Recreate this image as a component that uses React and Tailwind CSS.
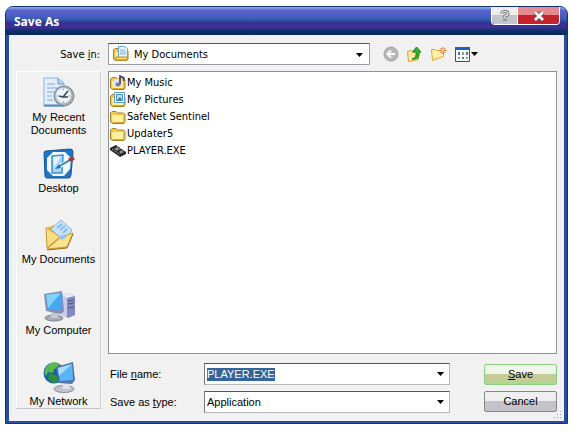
import { useEffect, useRef, useState } from "react";

function RecentIcon() {
  return (
    <svg className="h-8 w-8" viewBox="0 0 32 32" aria-hidden="true">
      <path d="M1 1h14l6 5v23H1z" fill="#e4effb" stroke="#8fb0dc" />
      <path d="M15 1v6h6" fill="#b9d2f0" stroke="#6f98d0" />
      <path d="M4 7h8M4 11h13M4 15h7M4 19h5M4 23h6" stroke="#7fa6dc" />
      <path d="M1 28.5h20" stroke="#4f86cc" strokeWidth="2" />
      <circle cx="21" cy="19" r="10" fill="#a9b0b8" stroke="#7c848d" />
      <circle cx="20.5" cy="18.5" r="7.5" fill="#eef6fb" stroke="#d5dde4" />
      <path d="M20 20l5-6M20 20l-4-1M20 20h5" stroke="#3b424d" strokeWidth="1.5" />
      <path d="M20.5 12v1M27 19h-1M20.5 25.500v-1M14 19h1" stroke="#5a7ea8" />
    </svg>
  );
}

function DesktopIcon() {
  return (
    <svg className="h-8 w-8" viewBox="0 0 32 32" aria-hidden="true">
      <path d="M1 5q0-2 2-2l24-2q3 0 3 3l-2 23q0 3-3 3H4q-2 0-2-2z" fill="#1f75c4" stroke="#14589f" />
      <path d="M10 4h12l6 6-1 11-6 7H10l-6-6V10z" fill="#f2faff" />
      <path d="M9 8l11-1-1 18H9z" fill="#a9d5f5" stroke="#3d8fd0" strokeWidth="1.5" />
      <path d="M10 9l8-1-7 12z" fill="#e3f4ff" />
      <path d="M15 19l12-6" stroke="#f4f8fb" strokeWidth="4" />
      <path d="M15 19l12-7" stroke="#3581bd" strokeWidth="2" />
      <path d="M12 21l4-5 2 4z" fill="#2672b5" />
      <path d="M26 12l5-2" stroke="#a33a38" strokeWidth="4" />
    </svg>
  );
}

function DocumentsIcon() {
  return (
    <svg className="h-8 w-8" viewBox="0 0 32 32" aria-hidden="true">
      <path d="M3 9l8-3 18 10-5 13-18 2z" fill="#e4b646" />
      <path d="M8 10L18 1l11 10-8 13z" fill="#c6e2fa" stroke="#8cb8df" />
      <path d="M14 9l5-4M17 11l5-4M20 14l4-4" stroke="#8abcea" strokeWidth="2" />
      <path d="M3 9l3 1 11 8L4 29z" fill="#f9de83" stroke="#c69a34" />
      <path d="M4 30l14-12 12-4-6 14z" fill="#fbe391" stroke="#c99c38" />
      <path d="M15 18l5-2 4 2-5 3z" fill="#8fc4ec" />
      <path d="M4 31l20-2 6-14" fill="none" stroke="#9b7426" />
    </svg>
  );
}

function ComputerIcon() {
  return (
    <svg className="h-8 w-8" viewBox="0 0 32 32" aria-hidden="true">
      <path d="M18 5l9-2 5 3v19l-7 3-7-4z" fill="#8388be" />
      <path d="M18 5l6 3v20l-6-4z" fill="#c9cce9" />
      <path d="M18 5l9-2 5 3-8 2z" fill="#e7e8f6" />
      <path d="M25 11l6-1M25 14l6-1M25 18l6-1" stroke="#4d5592" />
      <ellipse cx="11" cy="28" rx="9" ry="3" fill="#a7abb7" stroke="#80848f" />
      <path d="M8 21l8 2-1 5H8z" fill="#c5c9d3" />
      <path d="M1 4l18-3 2 20-3 3L3 21z" fill="#7f8fb9" />
      <path d="M3 5l15-2 1 17-14-1z" fill="#43a7f2" />
      <path d="M3 5l15-2-13 15z" fill="#83d2fc" />
    </svg>
  );
}

function NetworkIcon() {
  return (
    <svg className="h-8 w-8" viewBox="0 0 32 32" aria-hidden="true">
      <circle cx="11" cy="12" r="10.5" fill="#1b5fae" />
      <path d="M5 4q6-5 12-1l-3 4-3 1-1 4-5-1-2 4q-4-5 2-11z" fill="#57ba4a" />
      <path d="M6 12l8 3 1 6-4 1-6-4z" fill="#2d9139" />
      <ellipse cx="21" cy="28" rx="10" ry="3.5" fill="#c3c6d0" stroke="#8b8e9b" />
      <path d="M19 20l7-1 1 9h-7z" fill="#e1e3ea" />
      <path d="M13 6l17-5 2 18-3 4-13-1z" fill="#5472ac" />
      <path d="M15 7l14-4 1 16-13 1z" fill="#59b5f5" />
      <path d="M15 7l14-4-13 12z" fill="#a8dcfd" />
    </svg>
  );
}

function FolderIcon({ kind }) {
  return (
    <svg className="h-4 w-4 shrink-0" viewBox="0 0 16 16" aria-hidden="true">
      <path d="M.5 4L2 2.500h4L7.500 4h6L15 5.500V13l-1 1.500H2.500L.5 13z" fill="#f1c94f" stroke="#a98224" />
      <path d="M2 6h11.500v7H2.500z" fill="#fff0a0" />
      <path d="M2.500 13.500H14V6" fill="none" stroke="#d9a833" />
      {kind === "music" && (
        <>
          <path d="M4 4h8v7H4z" fill="#d8e0f4" />
          <path d="M10 9V1l4 2v3" fill="none" stroke="#34345e" strokeWidth="1.5" />
          <ellipse cx="8" cy="9.5" rx="2.5" ry="2" fill="#7475b0" />
        </>
      )}
      {kind === "pictures" && (
        <>
          <path d="M4.500.5h10v10h-10z" fill="#fff" stroke="#6d9cc8" />
          <path d="M6.500 2.500h6v6h-6z" fill="#b7e0f7" stroke="#4a94cc" />
          <path d="M7 8l3-3 2 3z" fill="#4a7c88" />
        </>
      )}
      {kind === "documents" && (
        <>
          <path d="M5.500.5h6l3 2v9h-9z" fill="#eaf6ff" stroke="#72a0ce" />
          <path d="M7 4h5M7 6h6M7 8h6" stroke="#7db2df" />
          <path d="M3 11h12l-1 3H2z" fill="#f6d878" stroke="#b98d20" />
        </>
      )}
    </svg>
  );
}

function ProgramIcon() {
  return (
    <svg className="h-4 w-4 shrink-0" viewBox="0 0 16 16" aria-hidden="true">
      <path d="M0 5l6-3 10 7v2l-6 3L0 7z" fill="#242424" />
      <path d="M4 6l3-2 3 2-3 2zM9 9l2-2 3 2-3 2z" fill="#8b8b8b" />
      <path d="M2 6l8 6M7 3l7 5" stroke="#ccc" strokeDasharray="1 1" />
    </svg>
  );
}

function Arrow({ className = "" }) {
  return (
    <svg className={`h-1 w-[7px] ${className}`} viewBox="0 0 7 4" aria-hidden="true">
      <path d="M0 0h7L3.500 4z" fill="#000" />
    </svg>
  );
}

const places = [
  { name: "My Recent Documents", Icon: RecentIcon },
  { name: "Desktop", Icon: DesktopIcon },
  { name: "My Documents", Icon: DocumentsIcon },
  { name: "My Computer", Icon: ComputerIcon },
  { name: "My Network", Icon: NetworkIcon },
];

const files = [
  { name: "My Music", kind: "music" },
  { name: "My Pictures", kind: "pictures" },
  { name: "SafeNet Sentinel", kind: "folder" },
  { name: "Updater5", kind: "folder" },
  { name: "PLAYER.EXE", kind: "program" },
];

function TitleBar() {
  return (
    <div className="flex h-7 shrink-0 items-start justify-between rounded-t-md bg-[linear-gradient(#8fb0ea_0%,#5a66cc_12%,#4a5cc4_34%,#2c62a8_44%,#3b3098_56%,#3a2f92_74%,#0b2f66_86%,#082b5c_100%)] pr-[7px] pl-2">
      <h1 className="pt-[7px] font-['Open_Sans',sans-serif] text-[12px] leading-4 font-bold text-white">Save As</h1>
      <div className="flex h-[18px] overflow-hidden rounded-b border border-t-0 border-white">
        <button aria-label="Help" className="flex w-[25px] items-center justify-center bg-linear-to-b from-[#ededf0] from-50% to-[#c3c5cc] to-50%">
          <svg className="h-3 w-2.5" viewBox="0 0 10 12" aria-hidden="true">
            <path d="M2 4V2.500Q2 1.500 5 1.500t3 2Q8 5 5 6v2M5 9v2" fill="none" stroke="#666" strokeWidth="3" />
            <path d="M2 4V2.500Q2 1.500 5 1.500t3 2Q8 5 5 6v2M5 9.500v1" fill="none" stroke="#fff" strokeWidth="1.2" />
          </svg>
        </button>
        <button aria-label="Close" className="flex w-[42px] items-center justify-center border-l border-white bg-linear-to-b from-[#e58a8e] from-45% to-[#c5222c] to-50%">
          <svg className="h-2.5 w-3" viewBox="0 0 12 10" aria-hidden="true">
            <path d="M2 1l8 8M10 1L2 9" stroke="#73545a" strokeWidth="4.500" />
            <path d="M2 1l8 8M10 1L2 9" stroke="#fff" strokeWidth="2.600" />
          </svg>
        </button>
      </div>
    </div>
  );
}

function Toolbar() {
  return (
    <div className="flex items-center gap-2">
      <button type="button" aria-label="Back">
        <svg className="h-4 w-4" viewBox="0 0 16 16" aria-hidden="true">
          <circle cx="8" cy="8" r="7" fill="#b8b8b8" stroke="#a0a0a0" />
          <path d="M12 8H5M8 4.500L4.500 8 8 11.500" fill="none" stroke="#fff" strokeWidth="2" />
        </svg>
      </button>
      <button type="button" aria-label="Up one level">
        <svg className="h-4 w-4" viewBox="0 0 16 16" aria-hidden="true">
          <path d="M.5 5.500l4-1 1 1h6v8l-10 2z" fill="#ffe99a" stroke="#d9a52e" />
          <path d="M5 13q5-1 4-7H5.500l4-5 4.500 5h-2q1 8-7 7z" fill="#39b52f" stroke="#18791b" />
        </svg>
      </button>
      <button type="button" aria-label="New folder">
        <svg className="h-4 w-4" viewBox="0 0 16 16" aria-hidden="true">
          <path d="M.5 3.500h4l1 1h7v6l-11 4z" fill="#fff0a9" stroke="#dfa931" />
          <path d="M12 1v7M8.500 4.500h7M9.500 2l5 5M14.500 2l-5 5" stroke="#e1662f" />
          <circle cx="12" cy="4.5" r="1.5" fill="#ffd36f" />
        </svg>
      </button>
      <button type="button" aria-label="Views" className="flex items-center gap-px">
        <svg className="h-[15px] w-[15px]" viewBox="0 0 15 15" aria-hidden="true">
          <path d="M.5.5h14v14H.5z" fill="#fff" stroke="#1c57a5" />
          <path d="M0 0h15v3H0z" fill="#1766bd" />
          <path d="M3 5h2v3H3zM11 5h2v3h-2zM7 10h2v2H7z" fill="#54709b" />
          <path d="M7 5h2v3H7zM3 10h2v2H3zM11 10h2v2h-2z" fill="#82a58f" />
        </svg>
        <Arrow className="w-[6px]" />
      </button>
    </div>
  );
}

export default function App() {
  const [fileName, setFileName] = useState("PLAYER.EXE");
  const nameRef = useRef(null);

  useEffect(() => {
    nameRef.current.focus();
    nameRef.current.select();
  }, []);

  return (
    <div className="flex min-h-screen flex-col bg-white pt-1.5 pr-[5px] pb-[9px] pl-[5px] font-['Liberation_Sans',sans-serif] text-[11px] leading-[13px] text-black">
      <div className="flex flex-1 flex-col rounded-t-lg border border-[#14346d] bg-[#294e9e]">
        <TitleBar />
        <form className="relative mx-[3px] mb-[2px] flex flex-1 flex-col bg-[#f1f1f1] px-[7px] pt-2 pb-2" onSubmit={(e) => e.preventDefault()}>
          {/* save in */}
          <div className="flex items-center">
            <label htmlFor="folder" className="w-[92px] pr-2 text-right font-['DejaVu_Sans_Condensed',sans-serif]">
              Save <u>i</u>n:
            </label>
            <div className="relative mr-[13px] w-[262px]">
              <select id="folder" className="block h-[22px] w-full appearance-none border border-[#9b9da2] border-t-[#55575c] bg-white pl-[25px] font-['DejaVu_Sans_Condensed',sans-serif] outline-none">
                <option>My Documents</option>
              </select>
              <span className="pointer-events-none absolute top-[3px] left-[5px]">
                <FolderIcon kind="documents" />
              </span>
              <Arrow className="pointer-events-none absolute top-[10px] right-[7px]" />
            </div>
            <Toolbar />
          </div>

          <div className="mt-1.5 flex flex-1 gap-[7px]">
            {/* places */}
            <nav className="mb-1 w-[85px] shrink-0 border border-white border-r-[#d2d2d5] border-b-[#c4c4c8] pt-[5px]">
              {places.map(({ name, Icon }) => (
                <button key={name} type="button" className="flex h-[71px] w-full flex-col items-center gap-0.5 last:h-[47px]">
                  <Icon />
                  <span className="px-1">{name}</span>
                </button>
              ))}
            </nav>

            <div className="flex min-w-0 flex-1 flex-col">
              {/* files */}
              <ul className="flex-1 border border-[#8f9196] bg-white pt-[2px] pl-px font-['DejaVu_Sans_Condensed',sans-serif]">
                {files.map((file) => (
                  <li key={file.name} className="flex h-[17px] items-center gap-px">
                    {file.kind === "program" ? <ProgramIcon /> : <FolderIcon kind={file.kind} />}
                    <span>{file.name}</span>
                  </li>
                ))}
              </ul>

              {/* name and type */}
              <div className="mt-[9px] flex justify-between pl-0.5">
                <div className="grid grid-cols-[94px_246px] items-center gap-y-1.5">
                  <label htmlFor="name">
                    File <u>n</u>ame:
                  </label>
                  <div className="flex h-[22px] items-center border border-[#b5b7bb] border-t-[#55575c] border-l-[#77797e] bg-white pl-[2px]">
                    <input
                      id="name"
                      ref={nameRef}
                      value={fileName}
                      onChange={(e) => setFileName(e.target.value)}
                      className="min-w-0 flex-1 outline-none selection:bg-[#35649b] selection:text-white"
                    />
                    <button type="button" aria-label="Recent names" className="px-[5px]">
                      <Arrow />
                    </button>
                  </div>
                  <label htmlFor="type">
                    Save as <u>t</u>ype:
                  </label>
                  <div className="relative">
                    <select id="type" className="block h-[22px] w-full appearance-none border border-[#b5b7bb] border-t-[#55575c] border-l-[#77797e] bg-white pl-[2px] outline-none">
                      <option>Application</option>
                    </select>
                    <Arrow className="pointer-events-none absolute top-[9px] right-[6px]" />
                  </div>
                </div>
                <div className="flex w-[73px] flex-col gap-1.5 pt-px">
                  <button type="submit" className="h-[21px] rounded-xs border border-[#8fcf84] bg-linear-to-b from-[#f0f5e9] from-45% to-[#c7cb98] to-50% shadow-[inset_0_-2px_1px_#a9d98f]">
                    <u>S</u>ave
                  </button>
                  <button type="button" className="h-[21px] rounded-xs border border-[#85868b] bg-linear-to-b from-[#efeff1] from-45% to-[#c3c3c8] to-50%">
                    Cancel
                  </button>
                </div>
              </div>
            </div>
          </div>
          <svg className="absolute right-0.5 bottom-0.5 h-2 w-2" viewBox="0 0 8 8" aria-hidden="true">
            <path d="M6 0h1v1H6zM3 3h1v1H3zM6 3h1v1H6zM0 6h1v1H0zM3 6h1v1H3zM6 6h1v1H6z" fill="#9a9aa2" />
          </svg>
        </form>
      </div>
    </div>
  );
}
